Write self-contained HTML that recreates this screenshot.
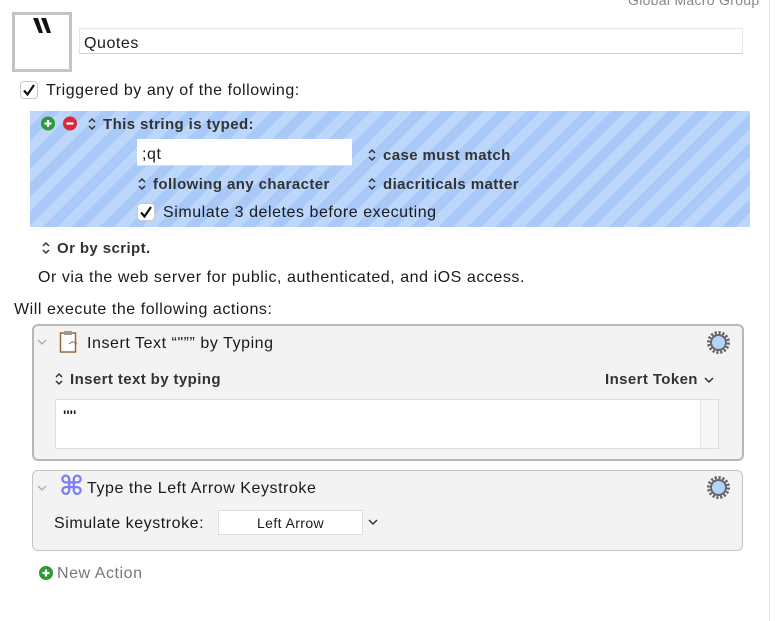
<!DOCTYPE html>
<html><head><meta charset="utf-8"><style>
*{box-sizing:border-box;margin:0;padding:0}
body{width:775px;height:621px;background:#fff;font-family:"Liberation Sans",sans-serif;color:#1a1a1a;position:relative;overflow:hidden;font-size:16px;letter-spacing:0.55px}
.a{position:absolute;white-space:nowrap;line-height:20px}
.b{font-weight:bold;font-size:15px;color:#333;letter-spacing:0.4px}
.ud{position:absolute;width:10px;height:14px}
.cb{position:absolute;width:18px;height:18px;border:1px solid #c8c8c8;border-radius:4px;background:#fff}
</style></head><body>
<div style="position:absolute;left:769px;top:0;width:1px;height:621px;background:#e2e2e2"></div>
<div class="a" style="left:628px;top:-10px;color:#888;font-size:14px;letter-spacing:0.3px">Global Macro Group</div>
<div style="position:absolute;left:12px;top:12px;width:60px;height:60px;border:3px solid #c4c4c4;background:#fff"></div>
<svg style="position:absolute;left:32px;top:17px" width="20" height="17"><path d="M1 1h5l5 15h-4z" fill="#111"/><path d="M9 1h5l5 15h-4z" fill="#111"/></svg>
<div style="position:absolute;left:79px;top:28px;width:664px;height:26px;border:1px solid #e6e6e6;border-bottom-color:#cfcfcf;background:#fff"></div>
<div class="a" style="left:84px;top:34px">Quotes</div>
<div class="cb" style="left:20px;top:81px"></div>
<svg style="position:absolute;left:22px;top:83px" width="14" height="14"><path d="M2 7.5l3.5 4L12 2" fill="none" stroke="#111" stroke-width="2.2"/></svg>
<div class="a" style="left:46px;top:81px">Triggered by any of the following:</div>
<div style="position:absolute;left:30px;top:111px;width:720px;height:116px;background:repeating-linear-gradient(-45deg,#bcd7fb 0 10px,#a9caf8 10px 20px)"></div>
<svg style="position:absolute;left:41px;top:116px" width="36" height="15"><circle cx="7" cy="7.5" r="7" fill="#2f9a35"/><path d="M7 4v7M3.5 7.5h7" stroke="#fff" stroke-width="2.2"/><circle cx="29" cy="7.5" r="7" fill="#d9283a"/><path d="M25.5 7.5h7" stroke="#fff" stroke-width="2.2"/></svg>
<svg class="ud" style="left:87px;top:117px" viewBox="0 0 10 14"><path d="M2 5l3-3 3 3M2 9l3 3 3-3" fill="none" stroke="#333" stroke-width="1.5"/></svg>
<div class="a b" style="left:103px;top:115px">This string is typed:</div>
<div style="position:absolute;left:137px;top:139px;width:215px;height:27px;background:#fff;border-bottom:1px solid #ddd"></div>
<div class="a" style="left:142px;top:145px">;qt</div>
<svg class="ud" style="left:367px;top:148px" viewBox="0 0 10 14"><path d="M2 5l3-3 3 3M2 9l3 3 3-3" fill="none" stroke="#333" stroke-width="1.5"/></svg>
<div class="a b" style="left:383px;top:146px">case must match</div>
<svg class="ud" style="left:137px;top:177px" viewBox="0 0 10 14"><path d="M2 5l3-3 3 3M2 9l3 3 3-3" fill="none" stroke="#333" stroke-width="1.5"/></svg>
<div class="a b" style="left:153px;top:175px">following any character</div>
<svg class="ud" style="left:367px;top:177px" viewBox="0 0 10 14"><path d="M2 5l3-3 3 3M2 9l3 3 3-3" fill="none" stroke="#333" stroke-width="1.5"/></svg>
<div class="a b" style="left:383px;top:175px">diacriticals matter</div>
<div class="cb" style="left:137px;top:203px"></div>
<svg style="position:absolute;left:139px;top:205px" width="14" height="14"><path d="M2 7.5l3.5 4L12 2" fill="none" stroke="#111" stroke-width="2.2"/></svg>
<div class="a" style="left:163px;top:203px">Simulate 3 deletes before executing</div>
<svg class="ud" style="left:41px;top:241px" viewBox="0 0 10 14"><path d="M2 5l3-3 3 3M2 9l3 3 3-3" fill="none" stroke="#333" stroke-width="1.5"/></svg>
<div class="a b" style="left:57px;top:239px">Or by script.</div>
<div class="a" style="left:38px;top:268px">Or via the web server for public, authenticated, and iOS access.</div>
<div class="a" style="left:14px;top:300px">Will execute the following actions:</div>
<div style="position:absolute;left:32px;top:324px;width:712px;height:137px;border:2px solid #b8b8b8;border-radius:6px;background:#f3f3f3"></div>
<svg style="position:absolute;left:37px;top:338px" width="10" height="8"><path d="M1 2l4 4 4-4" fill="none" stroke="#aaa" stroke-width="1.3"/></svg>
<svg style="position:absolute;left:59px;top:330px" width="22" height="24"><rect x="1.5" y="3" width="15" height="19" fill="#fff" stroke="#9a6a3a" stroke-width="1.5"/><rect x="5" y="1" width="8" height="4" fill="#999"/><path d="M10 14q4-4 8 0" fill="none" stroke="#777"/></svg>
<div class="a" style="left:87px;top:334px">Insert Text “"”” by Typing</div>
<svg style="position:absolute;left:706px;top:330px" width="25" height="25" viewBox="0 0 25 25"><circle cx="12.5" cy="12.5" r="10" fill="none" stroke="#666" stroke-width="3" stroke-dasharray="2.2 1.7"/><circle cx="12.5" cy="12.5" r="8.5" fill="#666"/><circle cx="12.5" cy="12.5" r="6.5" fill="#b5d3fb"/></svg>
<svg class="ud" style="left:54px;top:372px" viewBox="0 0 10 14"><path d="M2 5l3-3 3 3M2 9l3 3 3-3" fill="none" stroke="#333" stroke-width="1.5"/></svg>
<div class="a b" style="left:70px;top:370px">Insert text by typing</div>
<div class="a b" style="left:605px;top:370px">Insert Token</div>
<svg style="position:absolute;left:704px;top:376px" width="10" height="8"><path d="M1 2l4 4 4-4" fill="none" stroke="#333" stroke-width="1.5"/></svg>
<div style="position:absolute;left:55px;top:399px;width:664px;height:50px;background:#fff;border:1px solid #ddd"></div>
<div style="position:absolute;left:700px;top:400px;width:18px;height:48px;background:#f6f6f6;border-left:1px solid #e8e8e8"></div>
<div class="a" style="left:63px;top:405px;font-size:14px;font-weight:bold;letter-spacing:0">''''</div>
<div style="position:absolute;left:32px;top:470px;width:711px;height:81px;border:1px solid #c4c4c4;border-radius:6px;background:#f3f3f3"></div>
<svg style="position:absolute;left:37px;top:484px" width="10" height="8"><path d="M1 2l4 4 4-4" fill="none" stroke="#aaa" stroke-width="1.3"/></svg>
<div class="a" style="left:59px;top:472px;font-size:27px;line-height:30px;color:#7b7ff0;font-family:'DejaVu Sans',sans-serif;font-weight:bold">⌘</div>
<div class="a" style="left:87px;top:479px">Type the Left Arrow Keystroke</div>
<svg style="position:absolute;left:706px;top:475px" width="25" height="25" viewBox="0 0 25 25"><circle cx="12.5" cy="12.5" r="10" fill="none" stroke="#666" stroke-width="3" stroke-dasharray="2.2 1.7"/><circle cx="12.5" cy="12.5" r="8.5" fill="#666"/><circle cx="12.5" cy="12.5" r="6.5" fill="#b5d3fb"/></svg>
<div class="a" style="left:54px;top:514px">Simulate keystroke:</div>
<div style="position:absolute;left:218px;top:510px;width:145px;height:25px;background:#fff;border:1px solid #ddd"></div>
<div class="a" style="left:218px;top:513px;width:145px;text-align:center;font-size:14px;letter-spacing:0.4px">Left Arrow</div>
<svg style="position:absolute;left:368px;top:518px" width="10" height="8"><path d="M1 2l4 4 4-4" fill="none" stroke="#333" stroke-width="1.5"/></svg>
<svg style="position:absolute;left:39px;top:566px" width="14" height="14"><circle cx="7" cy="7" r="7" fill="#2f9a35"/><path d="M7 3.5v7M3.5 7h7" stroke="#fff" stroke-width="2.2"/></svg>
<div class="a" style="left:57px;top:564px;color:#777">New Action</div>
</body></html>
